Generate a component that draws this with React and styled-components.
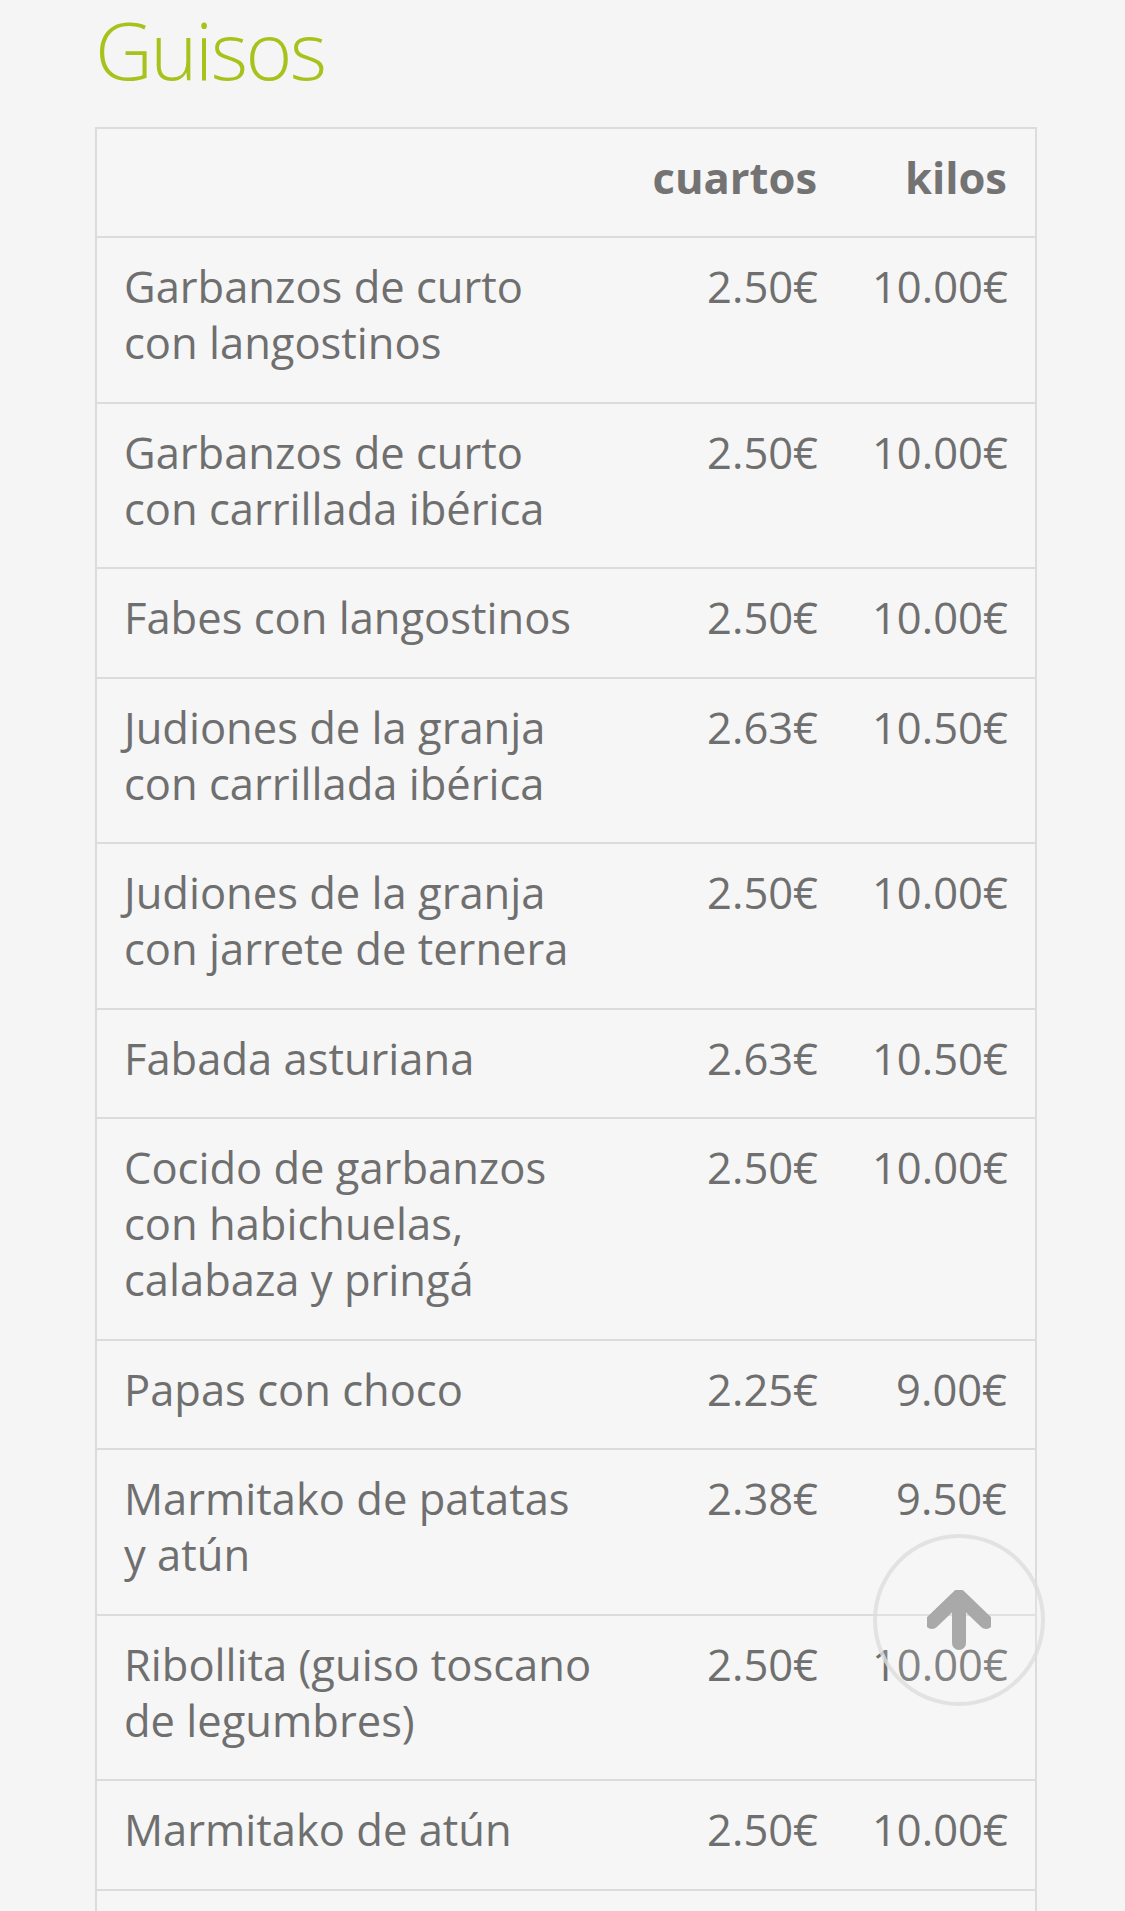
import React from 'react'
import styled, { createGlobalStyle } from 'styled-components'

const GlobalStyle = createGlobalStyle`
  html, body {
    margin: 0;
    padding: 0;
    background: #f5f5f5;
    font-family: 'Open Sans', 'Liberation Sans', sans-serif;
    color: #6f6f6f;
  }
`

const dishes = [
  { name: 'Garbanzos de curto con langostinos', q: '2.50€', k: '10.00€' },
  { name: 'Garbanzos de curto con carrillada ibérica', q: '2.50€', k: '10.00€' },
  { name: 'Fabes con langostinos', q: '2.50€', k: '10.00€' },
  { name: 'Judiones de la granja con carrillada ibérica', q: '2.63€', k: '10.50€' },
  { name: 'Judiones de la granja con jarrete de ternera', q: '2.50€', k: '10.00€' },
  { name: 'Fabada asturiana', q: '2.63€', k: '10.50€' },
  { name: 'Cocido de garbanzos con habichuelas, calabaza y pringá', q: '2.50€', k: '10.00€' },
  { name: 'Papas con choco', q: '2.25€', k: '9.00€' },
  { name: 'Marmitako de patatas y atún', q: '2.38€', k: '9.50€' },
  { name: 'Ribollita (guiso toscano de legumbres)', q: '2.50€', k: '10.00€' },
  { name: 'Marmitako de atún', q: '2.50€', k: '10.00€' },
  { name: '\u00a0', q: '\u00a0', k: '\u00a0' },
]

export default function App() {
  return (
    <>
      <GlobalStyle />
      <Page>
        <Title>Guisos</Title>
        <Menu>
          <thead>
            <tr>
              <HeadCell />
              <HeadCell $w={220}>cuartos</HeadCell>
              <HeadCell $w={191}>kilos</HeadCell>
            </tr>
          </thead>
          <tbody>
            {dishes.map((d, i) => (
              <tr key={i}>
                <NameCell>{d.name}</NameCell>
                <PriceCell>{d.q}</PriceCell>
                <PriceCell $last>{d.k}</PriceCell>
              </tr>
            ))}
          </tbody>
        </Menu>
      </Page>
      <TopButton aria-label="subir">
        <svg width="64" height="60" viewBox="0 0 64 60">
          <path d="M5 32 L32 6 L59 32" fill="none" stroke="#a9a9a9" strokeWidth="14" strokeLinecap="round" strokeLinejoin="round" />
          <path d="M32 10 L32 53" fill="none" stroke="#a9a9a9" strokeWidth="14" strokeLinecap="round" />
        </svg>
      </TopButton>
    </>
  )
}

const Page = styled.div`
  padding: 0 88px 0 95px;
  height: 1911px;
  overflow: hidden;
`

const Title = styled.h1`
  margin: 0 0 30px;
  padding-top: 1px;
  font-size: 80px;
  line-height: 96px;
  font-weight: 300;
  color: #a6c31c;
  letter-spacing: -2.5px;
`

const Menu = styled.table`
  width: 942px;
  border-collapse: collapse;
  table-layout: fixed;
  border: 2.6px solid #dcdcdc;
  font-size: 43.5px;
  line-height: 56px;
  background: #f6f6f6;
  td, th {
    box-sizing: border-box;
    border-top: 2.6px solid #dcdcdc;
  }
`

const HeadCell = styled.th`
  width: ${p => (p.$w ? `${p.$w}px` : 'auto')};
  padding: 21px 28px 30px 27px;
  text-align: right;
  font-weight: 700;
  color: #737373;
`

const NameCell = styled.td`
  padding: 21px 27px 30.5px;
  vertical-align: top;
  text-align: left;
`

const PriceCell = styled.td`
  padding: 21px ${p => (p.$last ? '28px' : '27px')} 30.5px 27px;
  vertical-align: top;
  text-align: right;
  white-space: nowrap;
`

const TopButton = styled.button`
  position: absolute;
  left: 873px;
  top: 1534px;
  width: 172px;
  height: 172px;
  border-radius: 50%;
  border: 4px solid rgba(220, 220, 220, 0.8);
  background: rgba(245, 245, 245, 0.15);
  display: flex;
  align-items: center;
  justify-content: center;
  padding: 0;
  cursor: pointer;
`
